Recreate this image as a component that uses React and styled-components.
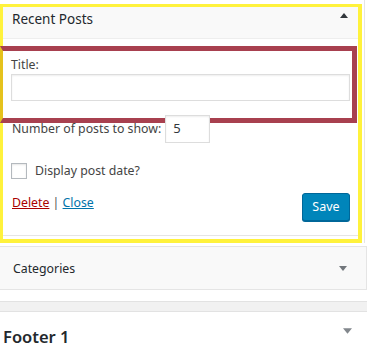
import React from 'react';
import styled, { createGlobalStyle } from 'styled-components';

const GlobalStyle = createGlobalStyle`
  html, body {
    margin: 0;
    padding: 0;
    background: #fff;
  }
  body {
    font-family: "Noto Sans", "Open Sans", sans-serif;
    font-size: 12.3px;
    color: #444;
    overflow: hidden;
  }
`;

const Page = styled.div`
  width: 367px;
  height: 359px;
  display: flex;
  flex-direction: column;
  overflow: hidden;
`;

const WidgetShell = styled.div`
  width: 362px;
  padding-top: 4px;
  padding-right: 2px;
  border-right: 1px solid #e5e5e5;
`;

const Highlight = styled.div`
  border: 4px solid #fff23c;
  border-left-width: 3px;
  border-top-width: 3px;
  padding-bottom: 3px;
  background: #fff;
`;

const WidgetTop = styled.div`
  height: 31px;
  background: #f9f9f9;
  border-bottom: 1px solid #eee;
  display: flex;
  align-items: flex-start;
  justify-content: space-between;
  padding: 0 10px 0 9px;
`;

const WidgetTitle = styled.h3`
  margin: 0;
  padding-top: 2px;
  font-size: 13.5px;
  font-weight: 400;
  line-height: 20px;
  color: #23282d;
`;

const Arrow = styled.svg`
  display: block;
  margin-top: ${({ $top }) => $top}px;
  fill: ${({ $color }) => $color};
`;

const WidgetBody = styled.div`
  display: flex;
  flex-direction: column;
  padding: 7px 0 14px;
  border-bottom: 1px solid #e5e5e5;
`;

const Focus = styled.div`
  margin-left: -3px;
  margin-right: 1px;
  border: 5px solid #a8404f;
  border-left: 3px solid #e5c21c;
  padding: 5px 2px 17px 8px;
  display: flex;
  flex-direction: column;
`;

const Label = styled.label`
  display: block;
  line-height: 18px;
  color: #444;
`;

const TextInput = styled.div`
  box-sizing: border-box;
  height: 27px;
  width: 100%;
  border: 1px solid #ddd;
  box-shadow: inset 0 1px 2px rgba(0, 0, 0, 0.07);
  background: #fff;
`;

const Row = styled.div`
  display: flex;
  align-items: ${({ $align }) => $align || 'center'};
  justify-content: ${({ $justify }) => $justify || 'flex-start'};
  gap: ${({ $gap }) => $gap || 0}px;
  margin-top: ${({ $mt }) => $mt}px;
  padding: 0 8px 0 ${({ $pl }) => $pl || 9}px;
`;

const SmallInput = styled.div`
  position: relative;
  z-index: 1;
  box-sizing: border-box;
  width: 45px;
  height: 28px;
  border: 1px solid #ddd;
  box-shadow: inset 0 1px 2px rgba(0, 0, 0, 0.07);
  background: #fff;
  padding: 2px 0 0 7px;
  line-height: 20px;
  font-size: 13px;
  color: #32373c;
`;

const Checkbox = styled.span`
  box-sizing: border-box;
  width: 16px;
  height: 16px;
  border: 1px solid #b4b9be;
  box-shadow: inset 0 1px 2px rgba(0, 0, 0, 0.1);
  background: #fff;
`;

const Links = styled.div`
  line-height: 18px;
  padding-top: 1px;
  color: #555;
`;

const Link = styled.a`
  color: ${({ $danger }) => ($danger ? '#a00' : '#0073aa')};
  text-decoration: underline;
`;

const SaveButton = styled.button`
  box-sizing: border-box;
  width: 48px;
  height: 28px;
  background: #0085ba;
  border: 1px solid #006799;
  border-radius: 3px;
  box-shadow: 0 1px 0 #006799;
  color: #fff;
  font-family: inherit;
  font-size: 12.5px;
  padding: 0 0 2px;
`;

const Collapsed = styled.div`
  box-sizing: border-box;
  margin: 3px 0 0 -1px;
  width: 368px;
  height: 44px;
  background: #f9f9f9;
  border: 1px solid #e5e5e5;
  display: flex;
  align-items: center;
  justify-content: space-between;
  padding: 0 19px 0 13px;
`;

const CollapsedTitle = styled.span`
  font-size: 12.3px;
  color: #23282d;
`;

const Divider = styled.div`
  margin-top: 11px;
  height: 9px;
  background: #f1f1f1;
  border-top: 1px solid #e2e2e2;
  border-bottom: 1px solid #e2e2e2;
`;

const Sidebar = styled.div`
  display: flex;
  justify-content: space-between;
  align-items: flex-start;
  padding: 14px 15px 0 3px;
`;

const SidebarTitle = styled.h2`
  margin: 0;
  font-size: 16.5px;
  font-weight: 600;
  line-height: 22px;
  color: #23282d;
`;

const Triangle = ({ up, color, top, width = 8, height = 5 }) => (
  <Arrow width={width} height={height} viewBox="0 0 8 5" $color={color} $top={top}>
    {up ? <polygon points="4,0 8,5 0,5" /> : <polygon points="0,0 8,0 4,5" />}
  </Arrow>
);

const App = () => (
  <Page>
    <GlobalStyle />
    <WidgetShell>
      <Highlight>
        <WidgetTop>
          <WidgetTitle>Recent Posts</WidgetTitle>
          <Triangle up color="#32373c" top={6} />
        </WidgetTop>
        <WidgetBody>
          <Focus>
            <Label>Title:</Label>
            <TextInput />
          </Focus>
          <Row $mt={-8} $gap={4}>
            <Label>Number of posts to show:</Label>
            <SmallInput>5</SmallInput>
          </Row>
          <Row $mt={19} $gap={8} $pl={8}>
            <Checkbox />
            <Label>Display post date?</Label>
          </Row>
          <Row $mt={13} $align="flex-start" $justify="space-between">
            <Links>
              <Link $danger>Delete</Link> | <Link>Close</Link>
            </Links>
            <SaveButton>Save</SaveButton>
          </Row>
        </WidgetBody>
      </Highlight>
    </WidgetShell>
    <Collapsed>
      <CollapsedTitle>Categories</CollapsedTitle>
      <Triangle color="#72777c" />
    </Collapsed>
    <Divider />
    <Sidebar>
      <SidebarTitle>Footer 1</SidebarTitle>
      <Triangle color="#82878c" top={2} width={9} height={6} />
    </Sidebar>
  </Page>
);

export default App;
